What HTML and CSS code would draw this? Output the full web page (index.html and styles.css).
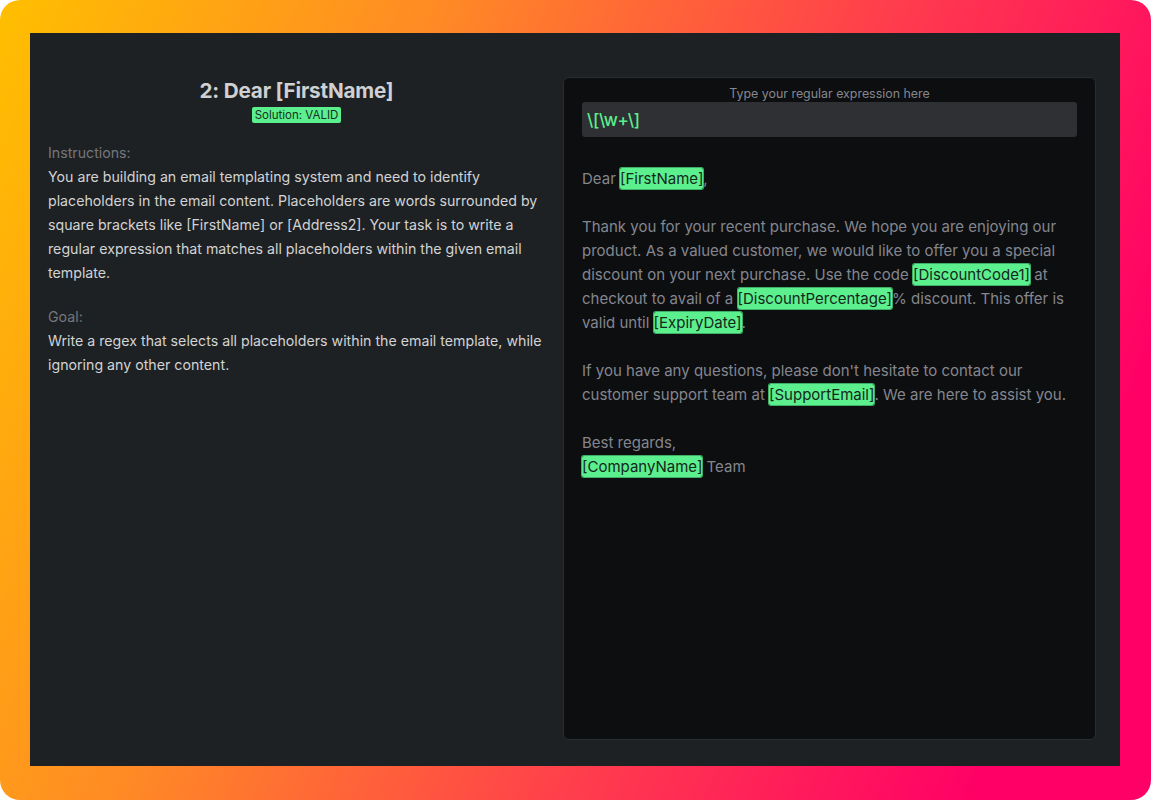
FILE: index.html
```html
<!DOCTYPE html>
<html lang="en">
<head>
    <meta charset="UTF-8">
    <meta name="viewport" content="width=device-width, initial-scale=1.0">
    <title>Regex Challenge 2: Dear [FirstName]</title>
    <link rel="stylesheet" href="styles.css">
</head>
<body>
    <div class="frame">
        <div class="app">
            <!-- Challenge description -->
            <section class="challenge">
                <h1>2: Dear [FirstName]</h1>
                <div class="status"><span class="badge">Solution: VALID</span></div>

                <p class="section-label">Instructions:</p>
                <p class="section-text">You are building an email templating system and need to identify placeholders in the email content. Placeholders are words surrounded by square brackets like [FirstName] or [Address2]. Your task is to write a regular expression that matches all placeholders within the given email template.</p>

                <p class="section-label">Goal:</p>
                <p class="section-text">Write a regex that selects all placeholders within the email template, while ignoring any other content.</p>
            </section>

            <!-- Regex playground -->
            <section class="playground">
                <label class="regex-label" for="regex">Type your regular expression here</label>
                <input class="regex-input" id="regex" type="text" value="\[\w+\]" spellcheck="false">

                <div class="email">
                    <p>Dear <mark>[FirstName]</mark>,</p>
                    <p>Thank you for your recent purchase. We hope you are enjoying our product. As a valued customer, we would like to offer you a special discount on your next purchase. Use the code <mark>[DiscountCode1]</mark> at checkout to avail of a <mark>[DiscountPercentage]</mark>% discount. This offer is valid until <mark>[ExpiryDate]</mark>.</p>
                    <p>If you have any questions, please don't hesitate to contact our customer support team at <mark>[SupportEmail]</mark>. We are here to assist you.</p>
                    <p>Best regards,<br><mark>[CompanyName]</mark> Team</p>
                </div>
            </section>
        </div>
    </div>
</body>
</html>
```

FILE: styles.css
```css
/* Global Styles */
body {
    margin: 0;
    padding: 0;
    background-color: #ffffff;
    font-family: Inter, "Noto Sans", sans-serif;
}

/* Gradient frame */
.frame {
    width: 1151px;
    height: 800px;
    box-sizing: border-box;
    padding: 33px 31px 34px 30px;
    border-radius: 20px;
    background: linear-gradient(112deg, #ffbf00 0%, #ff8a25 30%, #ff3a4e 62%, #ff0066 88%);
}

/* App window */
.app {
    height: 100%;
    box-sizing: border-box;
    background-color: #1e2123;
    padding: 44px 24px 26px 18px;
    display: grid;
    grid-template-columns: 497px 533px;
    gap: 18px;
}

/* Left column */
.challenge {
    padding-top: 2px;
}

h1 {
    margin: 0;
    font-size: 20.7px;
    line-height: 24px;
    font-weight: 700;
    color: #cfd0d1;
    text-align: center;
    letter-spacing: -0.2px;
}

.status {
    text-align: center;
    margin-top: 2px;
    line-height: 16px;
}

.badge {
    display: inline-block;
    background-color: #5cef8e;
    color: #15301f;
    font-size: 11.5px;
    line-height: 16px;
    padding: 0 3px;
    border-radius: 2px;
}

.section-label {
    margin: 18px 0 0;
    font-size: 14.2px;
    line-height: 24px;
    color: #74777e;
}

.section-text + .section-label {
    margin-top: 20px;
}

.section-text {
    margin: 0;
    font-size: 14.2px;
    line-height: 24px;
    color: #d2d3d4;
}

/* Right column */
.playground {
    background-color: #0d0e10;
    border: 1px solid #2a2d30;
    border-radius: 6px;
    padding: 8px 18px 0;
    display: flex;
    flex-direction: column;
}

.regex-label {
    text-align: center;
    font-size: 12.4px;
    line-height: 16px;
    color: #85888f;
}

.regex-input {
    height: 35px;
    box-sizing: border-box;
    margin: 0;
    padding: 0 5px;
    border: none;
    outline: none;
    border-radius: 3px;
    background-color: #2e3034;
    color: #5cef8e;
    font-family: Inter, "Noto Sans", sans-serif;
    font-size: 17px;
    font-weight: 500;
    letter-spacing: -0.3px;
}

.email {
    margin-top: 30px;
    font-size: 15px;
    line-height: 24px;
    color: #84868e;
}

.email p {
    margin: 0 0 24px;
}

.email mark {
    background-color: #5cef8e;
    color: #14281b;
    border-radius: 2px;
    padding: 1px 0;
    box-shadow: 0 0 0 1px #3fae66;
}
```
